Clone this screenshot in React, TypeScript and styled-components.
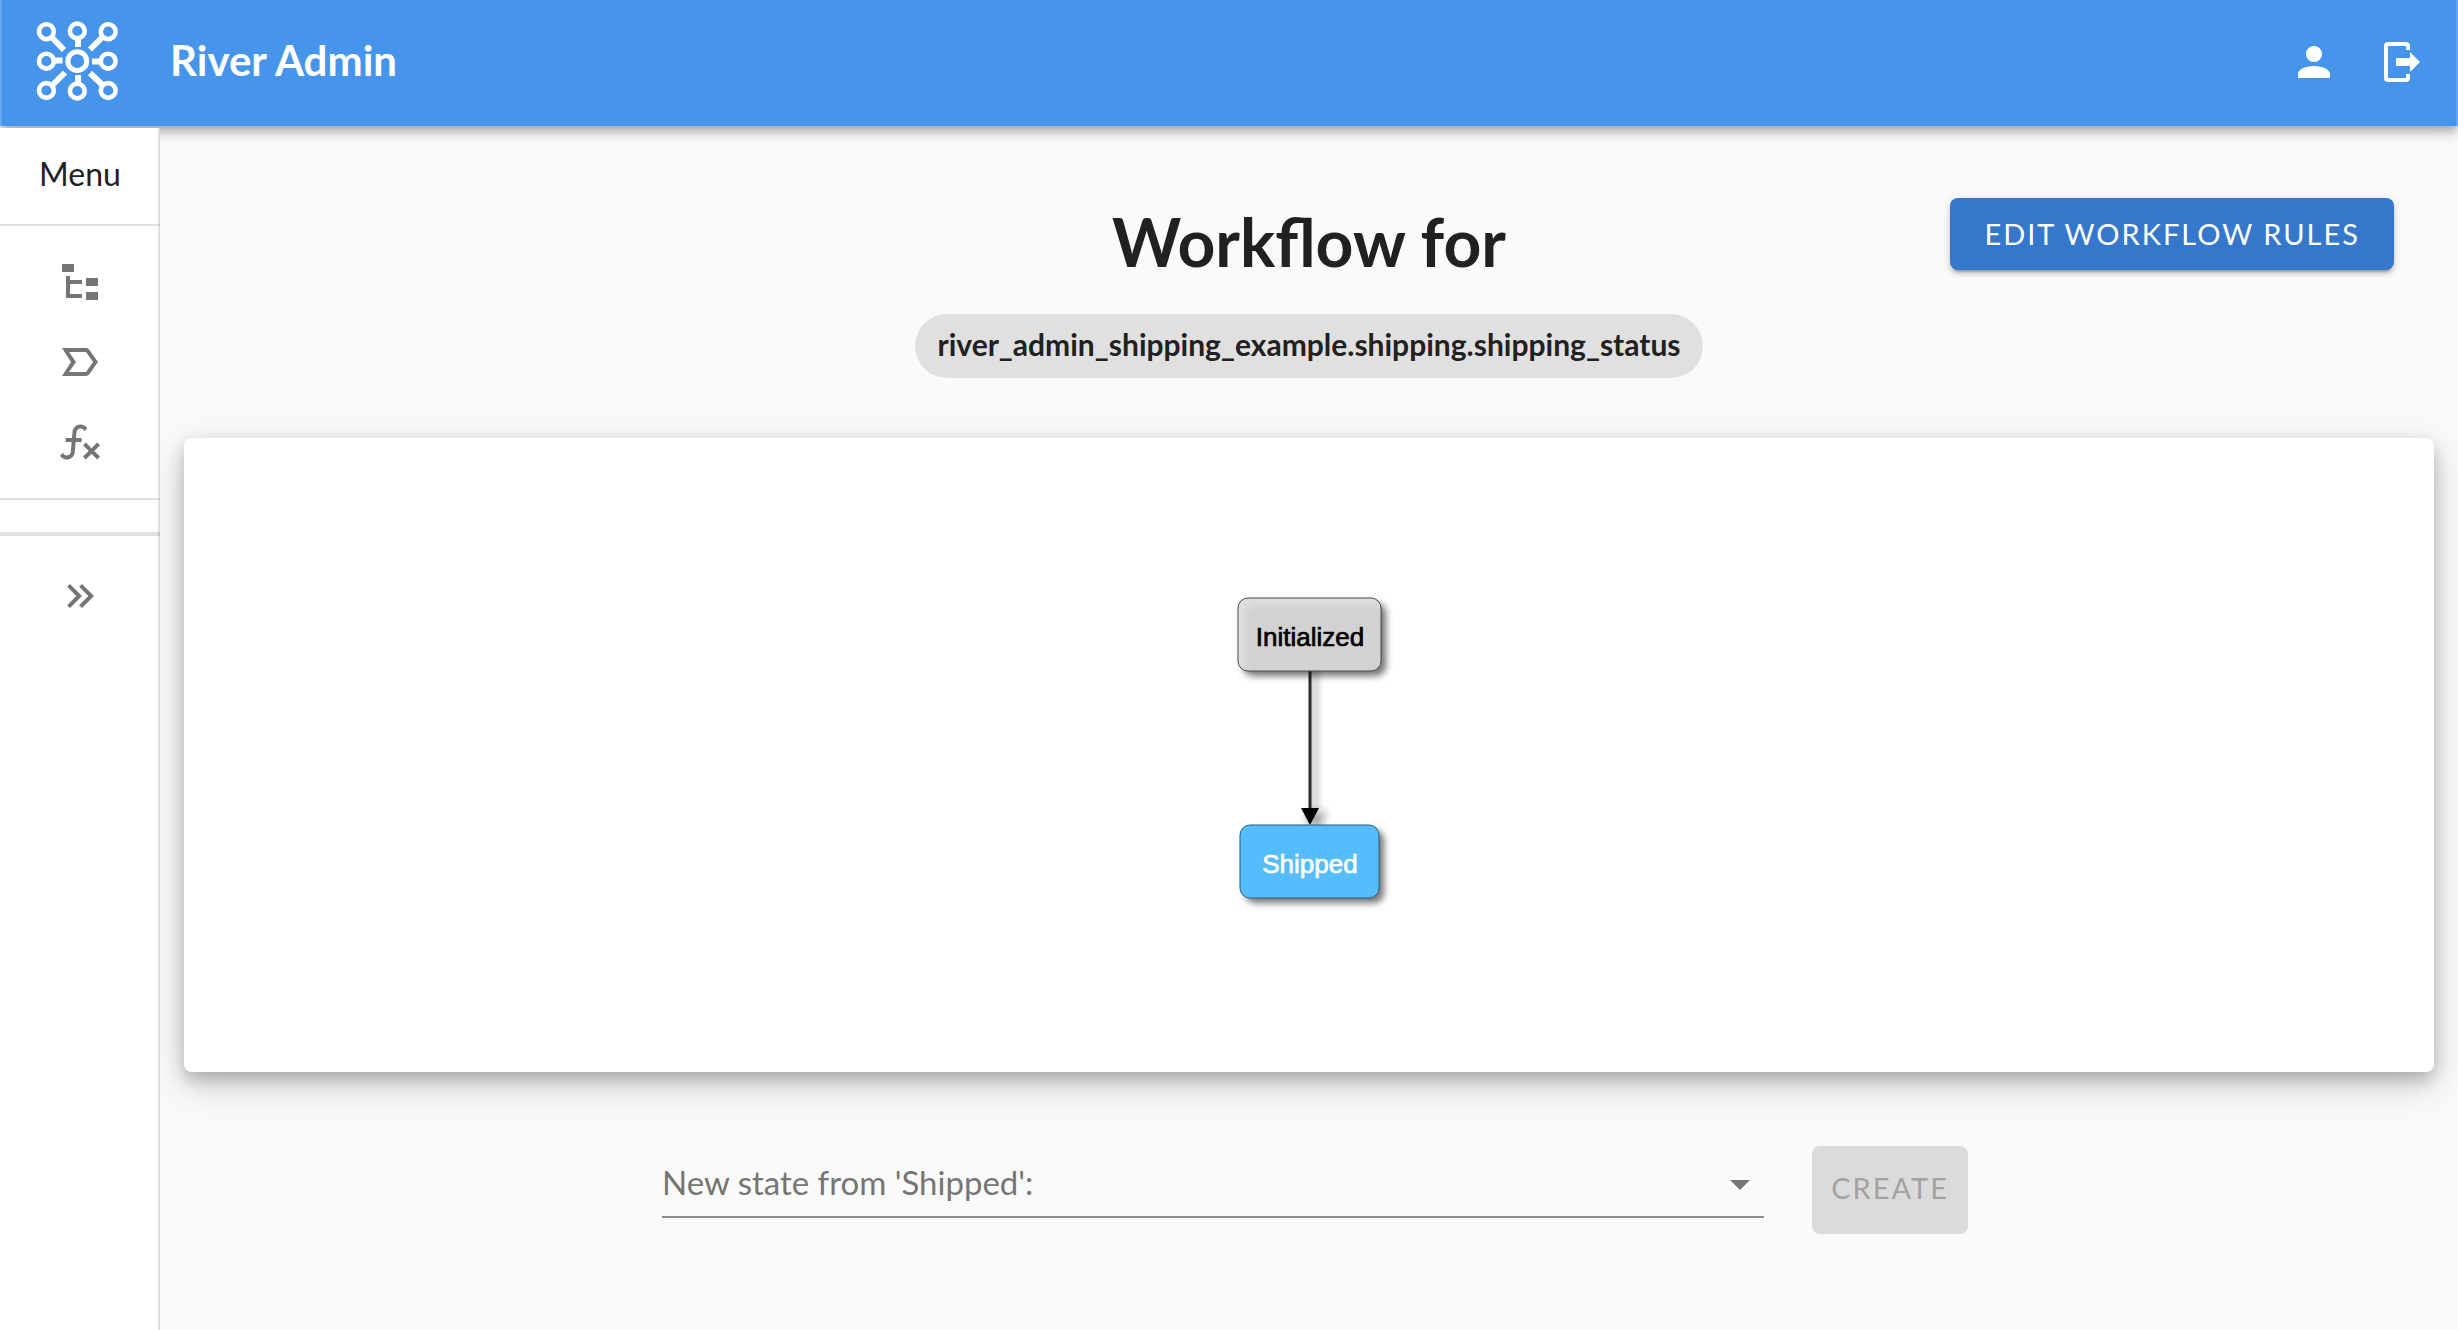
import React, { useState } from "react";
import styled, { createGlobalStyle } from "styled-components";

const GlobalStyle = createGlobalStyle`
  *, *::before, *::after { box-sizing: border-box; }
  body {
    margin: 0;
    background: #fafafa;
    color: #212121;
    font-family: Lato, "Open Sans", sans-serif;
  }
`;

const Page = styled.div`
  display: flex;
  flex-direction: column;
  min-height: 100vh;
`;

const AppBar = styled.header`
  position: relative;
  z-index: 1;
  display: flex;
  align-items: center;
  height: 126px;
  padding: 0 30px 2px;
  border: solid #66a8ef;
  border-width: 0 2px;
  background: #4695eb;
  color: #fff;
  box-shadow:
    0 4px 8px -2px rgba(0, 0, 0, 0.2),
    0 8px 10px rgba(0, 0, 0, 0.14),
    0 2px 20px rgba(0, 0, 0, 0.12);
`;

const Brand = styled.a`
  display: flex;
  align-items: center;
  gap: 42px;
  color: inherit;
  text-decoration: none;
`;

const BrandName = styled.span`
  padding-bottom: 4px;
  font-size: 42px;
  font-weight: 700;
  line-height: 48px;
`;

const BarActions = styled.div`
  display: flex;
  gap: 40px;
  margin-left: auto;
`;

const IconButton = styled.button`
  display: flex;
  padding: 0;
  border: 0;
  background: none;
  color: inherit;
  cursor: pointer;
`;

const Body = styled.div`
  display: flex;
  flex: 1;
`;

const Sidebar = styled.nav`
  position: relative;
  z-index: 2;
  flex: 0 0 160px;
  margin-top: 2px;
  background: #fff;
  box-shadow: inset -2px 0 0 #e0e0e0;
`;

const MenuTitle = styled.div`
  height: 98px;
  padding-top: 26px;
  border-bottom: 2px solid rgba(0, 0, 0, 0.12);
  font-size: 32px;
  line-height: 40px;
  text-align: center;
`;

const MenuList = styled.ul`
  margin: 0;
  padding: 16px 0;
  border-bottom: 2px solid rgba(0, 0, 0, 0.12);
  list-style: none;
`;

const MenuLink = styled.a`
  display: flex;
  align-items: center;
  justify-content: center;
  height: 80px;
  color: #757575;
`;

const MenuFooter = styled.div`
  display: flex;
  justify-content: center;
  margin-top: 32px;
  padding-top: 36px;
  border-top: 4px solid rgba(0, 0, 0, 0.12);
  color: #757575;
`;

const Main = styled.main`
  flex: 1;
  min-width: 0;
  padding: 72px 24px 48px;
`;

const PageHead = styled.div`
  display: grid;
  grid-template-columns: 1fr auto 1fr;
  align-items: start;
  margin-bottom: 60px;
`;

const Heading = styled.div`
  grid-column: 2;
  display: flex;
  flex-direction: column;
  align-items: center;
  gap: 28px;
`;

const Title = styled.h1`
  margin: 0;
  font-size: 66px;
  font-weight: 700;
  line-height: 88px;
`;

const Chip = styled.span`
  height: 64px;
  padding: 0 22px;
  border-radius: 32px;
  background: #e0e0e0;
  font-size: 30px;
  font-weight: 700;
  line-height: 60px;
`;

const Button = styled.button<{ $tall?: boolean }>`
  height: ${(p) => (p.$tall ? 88 : 72)}px;
  padding: 0 ${(p) => (p.$tall ? 0 : 34)}px ${(p) => (p.$tall ? 4 : 0)}px;
  border: 0;
  border-radius: 8px;
  background: #3577cb;
  color: #fff;
  font: 400 29px/40px Lato, "Open Sans", sans-serif;
  letter-spacing: 2px;
  text-transform: uppercase;
  box-shadow:
    0 6px 2px -4px rgba(0, 0, 0, 0.2),
    0 4px 4px rgba(0, 0, 0, 0.14),
    0 2px 10px rgba(0, 0, 0, 0.12);

  &:disabled {
    background: #dbdbdb;
    color: #a3a3a3;
    box-shadow: none;
  }
`;

const HeadAction = styled.div`
  justify-self: end;
  padding-right: 40px;
`;

const GraphCard = styled.section`
  display: flex;
  align-items: center;
  justify-content: center;
  min-height: 634px;
  border-radius: 8px;
  background: #fff;
  box-shadow:
    0 8px 16px rgba(0, 0, 0, 0.2),
    0 12px 40px rgba(0, 0, 0, 0.19);
`;

const StateForm = styled.form`
  display: grid;
  grid-template-columns: 478fr 1102fr 48px 156px 466fr;
  margin-top: 74px;
`;

const Field = styled.div`
  position: relative;
  grid-column: 2;
  height: 72px;
`;

const FieldLabel = styled.label`
  position: absolute;
  top: 16px;
  left: 0;
  color: #757575;
  font-size: 33px;
  line-height: 40px;
  pointer-events: none;
`;

const Select = styled.select`
  width: 100%;
  height: 72px;
  border: 0;
  border-bottom: 2px solid #8d8d8d;
  border-radius: 0;
  background: transparent;
  color: #212121;
  font: 400 33px/40px Lato, "Open Sans", sans-serif;
  appearance: none;
`;

const Caret = styled.svg`
  position: absolute;
  top: 34px;
  right: 14px;
  pointer-events: none;
`;

const CreateCell = styled.div`
  grid-column: 4;
  display: grid;
`;

const ICONS = {
  account:
    "M12,4A4,4 0 0,1 16,8A4,4 0 0,1 12,12A4,4 0 0,1 8,8A4,4 0 0,1 12,4M12,14C16.42,14 20,15.79 20,18V20H4V18C4,15.79 7.58,14 12,14Z",
  logout:
    "M5,2H14A2,2 0 0,1 16,4V6H14V4H5V20H14V18H16V20A2,2 0 0,1 14,22H5A2,2 0 0,1 3,20V4A2,2 0 0,1 5,2M9,10H16V7L21,12L16,17V14H9Z",
  tree: "M3,3H9V7H3V3M15,10H21V14H15V10M15,17H21V21H15V17M13,13H7V18H13V20H5V9H7V11H13V13Z",
  label:
    "M15 19H3l4.5-7L3 5h12c.65 0 1.26.31 1.63.84L21 12l-4.37 6.16c-.37.52-.98.84-1.63.84zM6.5 17H15l3.5-5L15 7H6.5l3.5 5-3.5 5z",
  fx: "M12.42,5.29C11.32,5.19 10.35,6 10.25,7.11L10,10H12.82V12H9.82L9.38,17.07C9.18,19.27 7.24,20.9 5.04,20.7C3.79,20.59 2.66,19.9 2,18.83L3.5,17.33C3.83,18.38 4.96,18.97 6,18.63C6.78,18.39 7.33,17.7 7.4,16.89L7.82,12H4.82V10H8L8.27,6.93C8.46,4.73 10.39,3.1 12.6,3.28C13.86,3.39 15,4.09 15.66,5.17L14.16,6.67C13.91,5.9 13.23,5.36 12.42,5.29M22,13.65L20.59,12.24L17.76,15.07L14.93,12.24L13.5,13.65L16.35,16.5L13.5,19.31L14.93,20.72L17.76,17.89L20.59,20.72L22,19.31L19.17,16.5L22,13.65Z",
  expand:
    "M5.59,7.41L7,6L13,12L7,18L5.59,16.59L10.17,12L5.59,7.41M11.59,7.41L13,6L19,12L13,18L11.59,16.59L16.17,12L11.59,7.41Z",
};

function Icon({ name }: { name: keyof typeof ICONS }) {
  return (
    <svg width="48" height="48" viewBox="0 0 24 24" fill="currentColor" fillRule="evenodd" aria-hidden="true">
      <path d={ICONS[name]} />
    </svg>
  );
}

const RING_CENTRES = [
  [46.4, 31.7], [77.3, 31], [108.2, 31.7],
  [46.4, 61.2], [108.2, 61.2],
  [46.4, 90.5], [77.3, 91], [108.2, 90.5],
];

function Logo() {
  return (
    <svg width="96" height="96" viewBox="32 14 96 96" fill="none" stroke="#fff" aria-hidden="true">
      {RING_CENTRES.map(([x, y]) => (
        <circle key={`${x}-${y}`} cx={x} cy={y} r="7.4" strokeWidth="4.6" />
      ))}
      <circle cx="77.3" cy="61.2" r="9.4" strokeWidth="5" />
      <path
        strokeWidth="6"
        d="M78 39V47M78 75V83M55 60.5H62.5M92 61.5H101M51.5 37L64 50M102.5 37L90 49.5M52.5 85L65 72.5M102.5 85L90 73"
      />
    </svg>
  );
}

function WorkflowGraph() {
  return (
    <svg width="200" height="370" viewBox="0 0 200 370" role="img" aria-label="Initialized to Shipped">
      <defs>
        <filter id="shadow" x="-20%" y="-20%" width="150%" height="160%">
          <feDropShadow dx="5" dy="5" stdDeviation="3.5" floodColor="#000" floodOpacity="0.55" />
        </filter>
        <filter id="soft" x="-50%" y="-50%" width="200%" height="200%">
          <feGaussianBlur stdDeviation="5" />
        </filter>
        <linearGradient id="edgeShade">
          <stop offset="0" stopColor="#000" stopOpacity="0.16" />
          <stop offset="0.5" stopColor="#000" stopOpacity="0.12" />
          <stop offset="1" stopColor="#000" stopOpacity="0" />
        </linearGradient>
        <clipPath id="initialClip">
          <rect x="29" y="28" width="143" height="73" rx="10" />
        </clipPath>
      </defs>
      <rect x="102" y="101" width="13" height="137" fill="url(#edgeShade)" />
      <path d="M96 242H118L110 257H102Z" fill="#000" opacity="0.4" filter="url(#soft)" />
      <path d="M101 101V238" stroke="#2b2b2b" strokeWidth="3" />
      <path d="M92 238H110L101 255Z" fill="#000" />
      <g filter="url(#shadow)">
        <rect x="29" y="28" width="143" height="73" rx="10" fill="#e0e0e0" />
      </g>
      <g clipPath="url(#initialClip)">
        <rect x="35" y="34" width="170" height="100" rx="10" fill="#d2d2d2" filter="url(#soft)" />
      </g>
      <rect x="29" y="28" width="143" height="73" rx="10" fill="none" stroke="#4a4a4a" />
      <g filter="url(#shadow)">
        <rect x="31" y="255" width="139" height="73" rx="10" fill="#54bdfb" />
      </g>
      <rect x="31" y="255" width="139" height="73" rx="10" fill="none" stroke="#2d5f7d" />
      <g fontFamily="'Liberation Sans', Arial, sans-serif" fontSize="26" textAnchor="middle" strokeWidth="0.7">
        <text x="101" y="76" fill="#000" stroke="#000">Initialized</text>
        <text x="101" y="303" fill="#fff" stroke="#fff">Shipped</text>
      </g>
    </svg>
  );
}

const MENU: { icon: keyof typeof ICONS; label: string }[] = [
  { icon: "tree", label: "Workflows" },
  { icon: "label", label: "States" },
  { icon: "fx", label: "Functions" },
];

export default function App() {
  const [state, setState] = useState("");
  return (
    <Page>
      <GlobalStyle />
      <AppBar>
        <Brand href="#">
          <Logo />
          <BrandName>River Admin</BrandName>
        </Brand>
        <BarActions>
          <IconButton type="button" aria-label="Account"><Icon name="account" /></IconButton>
          <IconButton type="button" aria-label="Log out"><Icon name="logout" /></IconButton>
        </BarActions>
      </AppBar>
      <Body>
        <Sidebar>
          <MenuTitle>Menu</MenuTitle>
          <MenuList>
            {MENU.map((item) => (
              <li key={item.label}>
                <MenuLink href="#" aria-label={item.label}><Icon name={item.icon} /></MenuLink>
              </li>
            ))}
          </MenuList>
          <MenuFooter>
            <IconButton type="button" aria-label="Expand menu"><Icon name="expand" /></IconButton>
          </MenuFooter>
        </Sidebar>
        <Main>
          <PageHead>
            <Heading>
              <Title>Workflow for</Title>
              <Chip>river_admin_shipping_example.shipping.shipping_status</Chip>
            </Heading>
            <HeadAction>
              <Button type="button">Edit workflow rules</Button>
            </HeadAction>
          </PageHead>
          <GraphCard>
            <WorkflowGraph />
          </GraphCard>
          <StateForm onSubmit={(e) => e.preventDefault()}>
            <Field>
              <FieldLabel htmlFor="new-state">New state from 'Shipped':</FieldLabel>
              <Select id="new-state" value={state} onChange={(e) => setState(e.target.value)}>
                <option value="" />
              </Select>
              <Caret width="20" height="10" viewBox="0 0 20 10" aria-hidden="true">
                <path d="M0 0H20L10 10Z" fill="#757575" />
              </Caret>
            </Field>
            <CreateCell>
              <Button type="submit" $tall disabled={!state}>Create</Button>
            </CreateCell>
          </StateForm>
        </Main>
      </Body>
    </Page>
  );
}
